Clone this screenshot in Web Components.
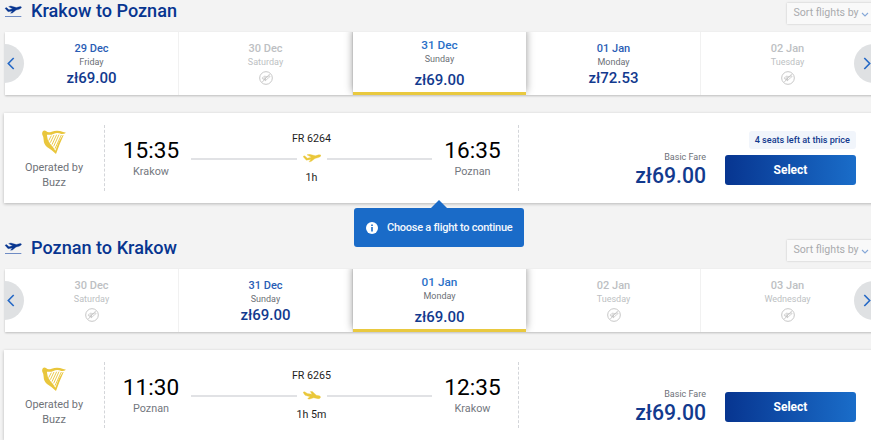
<!DOCTYPE html>
<html lang="en">
<head>
<meta charset="utf-8">
<title>Select flights</title>
<style>
  body {
    margin: 0;
    height: 440px;
    overflow: hidden;
    background: #f3f3f3;
    font-family: Roboto, "Liberation Sans", sans-serif;
    color: #1e1e1e;
  }
  main {
    width: 870px;
    padding-left: 4px;
  }
</style>
</head>
<body>
<main>
  <flight-journey heading="Krakow to Poznan">
    <date-carousel slot="dates">
      <date-tab date="29 Dec" day="Friday" price="zł69.00"></date-tab>
      <date-tab date="30 Dec" day="Saturday" disabled></date-tab>
      <date-tab date="31 Dec" day="Sunday" price="zł69.00" selected></date-tab>
      <date-tab date="01 Jan" day="Monday" price="zł72.53"></date-tab>
      <date-tab date="02 Jan" day="Tuesday" disabled></date-tab>
    </date-carousel>
    <flight-card number="FR 6264" duration="1h" from="Krakow" departs="15:35" to="Poznan" arrives="16:35" price="zł69.00" seats="4 seats left at this price" plane="takeoff"></flight-card>
    <flight-hint slot="hint">Choose a flight to continue</flight-hint>
  </flight-journey>

  <flight-journey heading="Poznan to Krakow">
    <date-carousel slot="dates">
      <date-tab date="30 Dec" day="Saturday" disabled></date-tab>
      <date-tab date="31 Dec" day="Sunday" price="zł69.00"></date-tab>
      <date-tab date="01 Jan" day="Monday" price="zł69.00" selected></date-tab>
      <date-tab date="02 Jan" day="Tuesday" disabled></date-tab>
      <date-tab date="03 Jan" day="Wednesday" disabled></date-tab>
    </date-carousel>
    <flight-card number="FR 6265" duration="1h 5m" from="Poznan" departs="11:30" to="Krakow" arrives="12:35" price="zł69.00" plane="landing"></flight-card>
  </flight-journey>
</main>

<script>
const PLANES = {
  takeoff: 'M0 7L5 5L13 12L25 9L12 2L19 0L37 5L47 2Q53 1 54 4Q53 8 46 10L36 13L24 22L18 23L24 16L10 18Z',
  landing: 'M0 3L5 2L13 7L27 9L22 1L28 1L40 12L49 14Q54 16 52 20Q50 24 42 22L32 20L18 24L14 22L21 17L6 12Z',
};

/* Title row, dates and flights of one leg */
class FlightJourney extends HTMLElement {
  constructor() {
    super();
    this.attachShadow({ mode: 'open' });
    this.shadowRoot.innerHTML = `<style>
      :host {
        display: block;
        position: relative;
        height: 237px;
      }
      :host(:last-of-type) {
        height: 203px;
      }
      header {
        display: flex;
        align-items: flex-start;
        height: 32px;
      }
      .icon {
        width: 18px;
        height: 14px;
        margin: 4px 9px 0 0;
      }
      h2 {
        margin: 0;
        font-size: 18.1px;
        line-height: 22px;
        font-weight: 500;
        color: #073590;
      }
      .flights {
        margin-top: 18px;
      }
    </style>
    <header>
      <svg class="icon" viewBox="0 0 54 42">
        <path fill="#073590" stroke="#073590" transform="translate(3 6) scale(.92 .95)" d="${PLANES.takeoff}"/>
        <path stroke="#6f8cc4" stroke-width="3" d="M3 37.500h49"/>
      </svg>
      <h2></h2>
      <sort-menu>Sort flights by</sort-menu>
    </header>
    <slot name="dates"></slot>
    <div class="flights"><slot></slot></div>
    <slot name="hint"></slot>`;
  }

  connectedCallback() {
    this.shadowRoot.querySelector('h2').textContent = this.getAttribute('heading');
  }
}

class SortMenu extends HTMLElement {
  constructor() {
    super();
    this.attachShadow({ mode: 'open' });
    this.shadowRoot.innerHTML = `<style>
      :host {
        display: flex;
        align-items: center;
        box-sizing: border-box;
        width: 87px;
        height: 21px;
        margin: 3px 0 0 auto;
        padding: 0 0 2px 6.5px;
        background: #f9f9f9;
        box-shadow: 0 0 2px rgba(0, 0, 0, 0.2);
        color: #a9abae;
        font-size: 10.6px;
        line-height: 19px;
        white-space: nowrap;
      }
      svg {
        width: 8px;
        height: 6px;
        margin: 4px 0 0 2px;
      }
    </style>
    <slot></slot>
    <svg viewBox="0 0 8 6" fill="none" stroke="#86a8d8" stroke-width="1.1"><path d="M1 1l3 3 3-3"/></svg>`;
  }
}

class DateCarousel extends HTMLElement {
  constructor() {
    super();
    this.attachShadow({ mode: 'open' });
    this.shadowRoot.innerHTML = `<style>
      :host {
        display: block;
        position: relative;
        height: 63px;
      }
      .days {
        display: grid;
        grid-template-columns: repeat(5, 174px);
        height: 63px;
        margin-left: 1px;
        background: #fff;
        box-shadow: 0 1px 2px rgba(0, 0, 0, 0.22);
      }
      .arrows {
        position: absolute;
        inset: 0;
        overflow: hidden;
      }
      button {
        position: absolute;
        top: 12px;
        width: 39px;
        height: 39px;
        padding: 0;
        border: 0;
        border-radius: 50%;
        background: #dfe1e3;
      }
      .prev { left: -19px; }
      .next { right: -19px; }
      svg {
        position: absolute;
        top: 13px;
        width: 8px;
        height: 13px;
      }
      .prev svg { left: 22px; }
      .next svg { left: 9px; }
    </style>
    <div class="days"><slot></slot></div>
    <div class="arrows">
      <button class="prev" aria-label="Previous"><svg viewBox="0 0 8 13" fill="none" stroke="#2468c6" stroke-width="1.6"><path d="M6.7 1L1.3 6.5l5.4 5.5"/></svg></button>
      <button class="next" aria-label="Next"><svg viewBox="0 0 8 13" fill="none" stroke="#2468c6" stroke-width="1.6"><path d="M1.3 1l5.4 5.5L1.3 12"/></svg></button>
    </div>`;
  }
}

class DateTab extends HTMLElement {
  constructor() {
    super();
    this.attachShadow({ mode: 'open' });
    this.shadowRoot.innerHTML = `<style>
      :host {
        display: flex;
        flex-direction: column;
        align-items: center;
        box-sizing: border-box;
        height: 63px;
        padding-top: 9px;
        border-right: 1px solid #f1f1f1;
        background: #fff;
      }
      :host([selected]) {
        position: relative;
        margin-right: 1px;
        padding-top: 6px;
        border-right: 0;
        border-bottom: 3px solid #e9c93f;
        box-shadow: 0 -3px 8px rgba(0, 0, 0, 0.42);
        clip-path: inset(0 -12px 0 -12px);
      }
      .date {
        font-size: 11px;
        line-height: 15px;
        font-weight: 500;
        color: #2a5db5;
      }
      .day {
        font-size: 9px;
        line-height: 12px;
        color: #6b6f76;
      }
      .price {
        margin-top: 1px;
        font-size: 15px;
        line-height: 18px;
        font-weight: 500;
        color: #123a8e;
      }
      :host([selected]) .date {
        font-size: 11.8px;
        color: #2a70c8;
      }
      :host([selected]) .price {
        margin-top: 6px;
      }
      :host([disabled]) .date,
      :host([disabled]) .day {
        color: #bdbfc3;
      }
      .none {
        display: none;
        width: 14px;
        height: 14px;
        margin-top: 3px;
      }
      :host([disabled]) .none { display: block; }
      :host([disabled]) .price { display: none; }
    </style>
    <div class="date"></div>
    <div class="day"></div>
    <div class="price"></div>
    <svg class="none" viewBox="0 0 42 42">
      <circle cx="21" cy="21" r="19" fill="none" stroke="#bcbcbc" stroke-width="2.5"/>
      <path fill="none" stroke="#b4b4b4" stroke-width="3" transform="translate(9 15) rotate(-8 12 6) scale(.46 .6)" d="${PLANES.takeoff}"/>
      <path stroke="#b4b4b4" stroke-width="2" d="M10 33L32 9"/>
    </svg>`;
  }

  connectedCallback() {
    ['date', 'day', 'price'].forEach((name) => {
      this.shadowRoot.querySelector('.' + name).textContent = this.getAttribute(name) || '';
    });
  }
}

class FlightCard extends HTMLElement {
  constructor() {
    super();
    this.attachShadow({ mode: 'open' });
    this.shadowRoot.innerHTML = `<style>
      :host {
        display: grid;
        grid-template-columns: 100px 415px 1fr;
        height: 90px;
        background: #fff;
        box-shadow: 0 1px 3px rgba(0, 0, 0, 0.25);
      }
      .operator {
        display: flex;
        flex-direction: column;
        align-items: center;
        padding-top: 17px;
        font-size: 10.9px;
        line-height: 15px;
        text-align: center;
        color: #6f7379;
      }
      .harp {
        width: 24px;
        height: 25px;
        margin-bottom: 5px;
      }

      /* Departure, route line, arrival */
      .trip {
        display: grid;
        grid-template-columns: 86px 241px 1fr;
        height: 66px;
        box-sizing: border-box;
        margin-top: 12px;
        border: dashed #d3d5d9;
        border-width: 0 1px;
      }
      .stop {
        padding: 13px 5px 0 0;
        text-align: center;
        font-size: 10.8px;
        line-height: 15px;
        color: #73777e;
      }
      .stop.start { padding: 13px 0 0 6px; }
      .time {
        font-size: 22.6px;
        line-height: 26px;
        color: #000;
      }
      .route {
        display: flex;
        flex-direction: column;
        font-size: 10.7px;
        line-height: 14px;
        text-align: center;
        padding-top: 7px;
      }
      .line {
        display: flex;
        align-items: center;
        gap: 6px;
        height: 25px;
      }
      .line::before,
      .line::after {
        content: "";
        flex: 1;
        height: 2px;
        background: #e1e2e5;
      }
      .plane {
        width: 18px;
        height: 9px;
      }

      /* Fare and button */
      .fare {
        display: grid;
        grid-template-columns: 1fr 131px;
        column-gap: 19px;
        padding-right: 18px;
      }
      .amount {
        padding-top: 38px;
        text-align: right;
        font-size: 9px;
        line-height: 13px;
        color: #6d7178;
      }
      .price {
        font-size: 21.2px;
        line-height: 24px;
        font-weight: 500;
        color: #123a8e;
      }
      .action {
        display: flex;
        flex-direction: column;
        align-items: flex-end;
        padding-top: 18px;
      }
      .seats {
        height: 18px;
        margin-bottom: 6px;
        padding: 0 6px;
        border-radius: 3px;
        background: #f1f5fb;
        font-size: 9.1px;
        line-height: 18px;
        font-weight: 500;
        color: #123a8e;
        white-space: nowrap;
      }
      .seats:empty { visibility: hidden; }
      button {
        width: 131px;
        height: 30px;
        padding: 0;
        border: 0;
        border-radius: 3px;
        background: linear-gradient(90deg, #073590, #1a6dc9);
        color: #fff;
        font: bold 12px/30px Roboto, sans-serif;
      }
    </style>
    <div class="operator">
      <svg class="harp" viewBox="0 0 72 75">
        <path fill="#e9c63c" d="M3 3Q8-1 13 4Q18 9 29 5Q42 0 54 3Q64 6 72 8Q66 13 58 12Q46 7 36 11Q25 16 15 14Q14 28 25 42Q35 52 40 62Q48 36 62 16L65 15Q52 43 42 72Q30 60 15 51Q5 42 5 30Q5 20 1 14Q-1 9 3 3Z"/>
        <path fill="none" stroke="#e9c63c" stroke-width="2.8" d="M28 17L20 32M36 15L25 38M44 14L30 44M51 14L35 49M58 15L39 56"/>
      </svg>
      <div>Operated by<br>Buzz</div>
    </div>
    <div class="trip">
      <div class="stop start"><div class="time departs"></div><div class="from"></div></div>
      <div class="route">
        <div class="number"></div>
        <div class="line"><svg class="plane" viewBox="0 0 54 26"><path fill="#eac73a" stroke="#eac73a"/></svg></div>
        <div class="duration"></div>
      </div>
      <div class="stop"><div class="time arrives"></div><div class="to"></div></div>
    </div>
    <div class="fare">
      <div class="amount">Basic Fare<div class="price"></div></div>
      <div class="action">
        <div class="seats"></div>
        <button>Select</button>
      </div>
    </div>`;
  }

  connectedCallback() {
    ['departs', 'from', 'number', 'duration', 'arrives', 'to', 'price', 'seats'].forEach((name) => {
      this.shadowRoot.querySelector('.' + name).textContent = this.getAttribute(name) || '';
    });
    this.shadowRoot.querySelector('.plane path').setAttribute('d', PLANES[this.getAttribute('plane')]);
  }
}

/* Floating message that points up at the flight */
class FlightHint extends HTMLElement {
  constructor() {
    super();
    this.attachShadow({ mode: 'open' });
    this.shadowRoot.innerHTML = `<style>
      :host {
        position: absolute;
        z-index: 1;
        top: 208px;
        left: 350px;
        display: flex;
        align-items: center;
        box-sizing: border-box;
        width: 170px;
        height: 39px;
        padding-left: 12px;
        border-radius: 3px;
        background: #1a6bc8;
        color: #f2f7fd;
        font-size: 11px;
        letter-spacing: -0.25px;
        font-weight: 500;
        white-space: nowrap;
      }
      :host::before {
        content: "";
        position: absolute;
        top: -8px;
        left: 77px;
        border: solid transparent;
        border-width: 0 8px 8px;
        border-bottom-color: #1a6bc8;
      }
      svg {
        width: 12px;
        height: 12px;
        margin-right: 9px;
      }
    </style>
    <svg viewBox="0 0 12 12">
      <circle cx="6" cy="6" r="6" fill="#fff"/>
      <path fill="#1a6bc8" d="M5.2 2.5h1.6v1.5H5.2zM5.2 5h1.6v4.5H5.2z"/>
    </svg>
    <slot></slot>`;
  }
}

customElements.define('sort-menu', SortMenu);
customElements.define('date-tab', DateTab);
customElements.define('date-carousel', DateCarousel);
customElements.define('flight-card', FlightCard);
customElements.define('flight-hint', FlightHint);
customElements.define('flight-journey', FlightJourney);
</script>
</body>
</html>
